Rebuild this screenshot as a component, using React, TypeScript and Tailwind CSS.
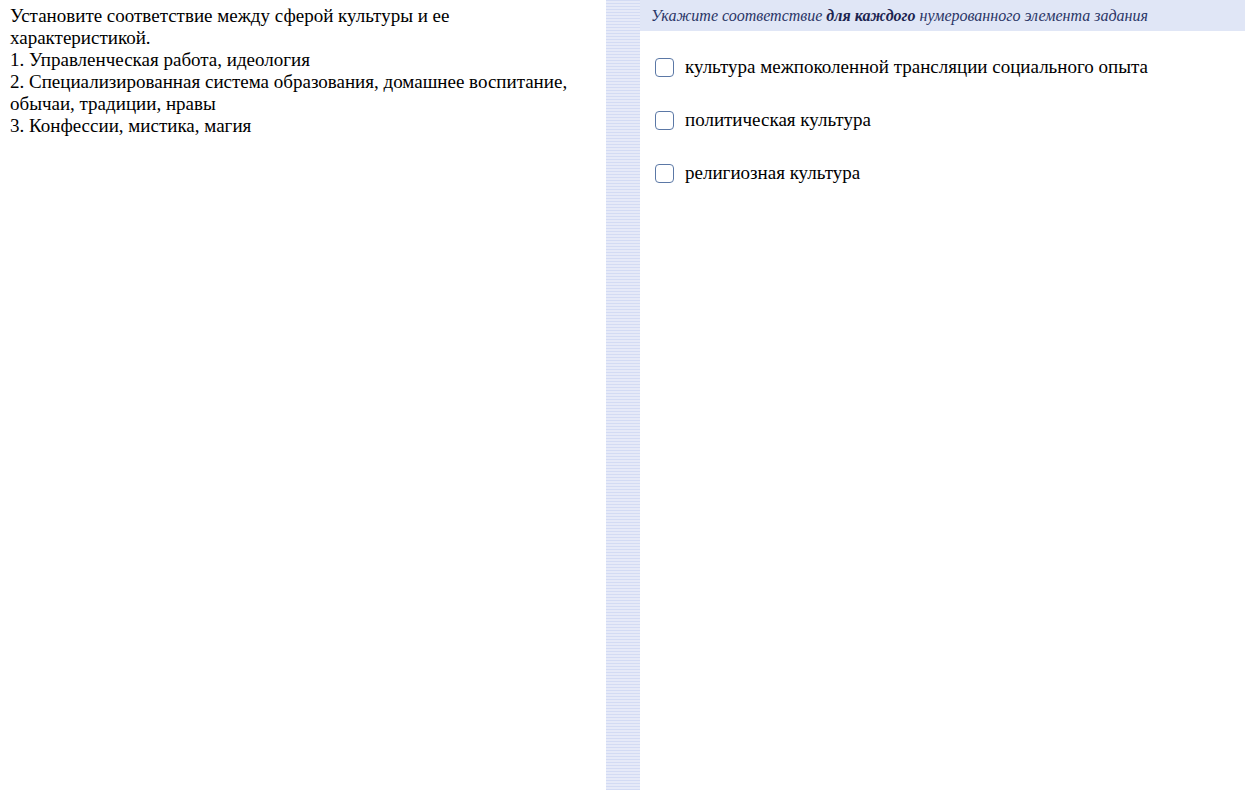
import React from "react";

const items = [
  "культура межпоколенной трансляции социального опыта",
  "политическая культура",
  "религиозная культура",
];

export default function App() {
  return (
    <div className="flex h-[790px] w-[1245px] bg-white font-['Liberation_Serif',serif] text-black">
      <div className="w-[606px] shrink-0 pl-[10px] pr-[25px] pt-[5px] text-[19px] leading-[22px]">
        <div>Установите соответствие между сферой культуры и ее характеристикой.</div>
        <div>1. Управленческая работа, идеология</div>
        <div>2. Специализированная система образования, домашнее воспитание, обычаи, традиции, нравы</div>
        <div>3. Конфессии, мистика, магия</div>
      </div>
      <div className="w-[34px] shrink-0 bg-[repeating-linear-gradient(to_bottom,#d3dbf4_0px,#d3dbf4_1px,#e6eaf8_1px,#e6eaf8_3px)]" />
      <div className="flex-1">
        <div className="flex h-[31px] items-center bg-[#e0e6f6] pl-[11px] text-[16px] italic text-[#2a3566]">
          <span>
            Укажите соответствие <b className="font-bold text-[#1c2450]">для каждого</b> нумерованного элемента задания
          </span>
        </div>
        <div className="flex flex-col gap-[31px] pl-[15px] pt-[25px]">
          {items.map((t) => (
            <label key={t} className="flex h-[22px] items-center gap-[11px] text-[19px]">
              <span className="h-[19px] w-[19px] shrink-0 rounded-[4px] border border-[#5b78a6] bg-white" />
              <span>{t}</span>
            </label>
          ))}
        </div>
      </div>
    </div>
  );
}
